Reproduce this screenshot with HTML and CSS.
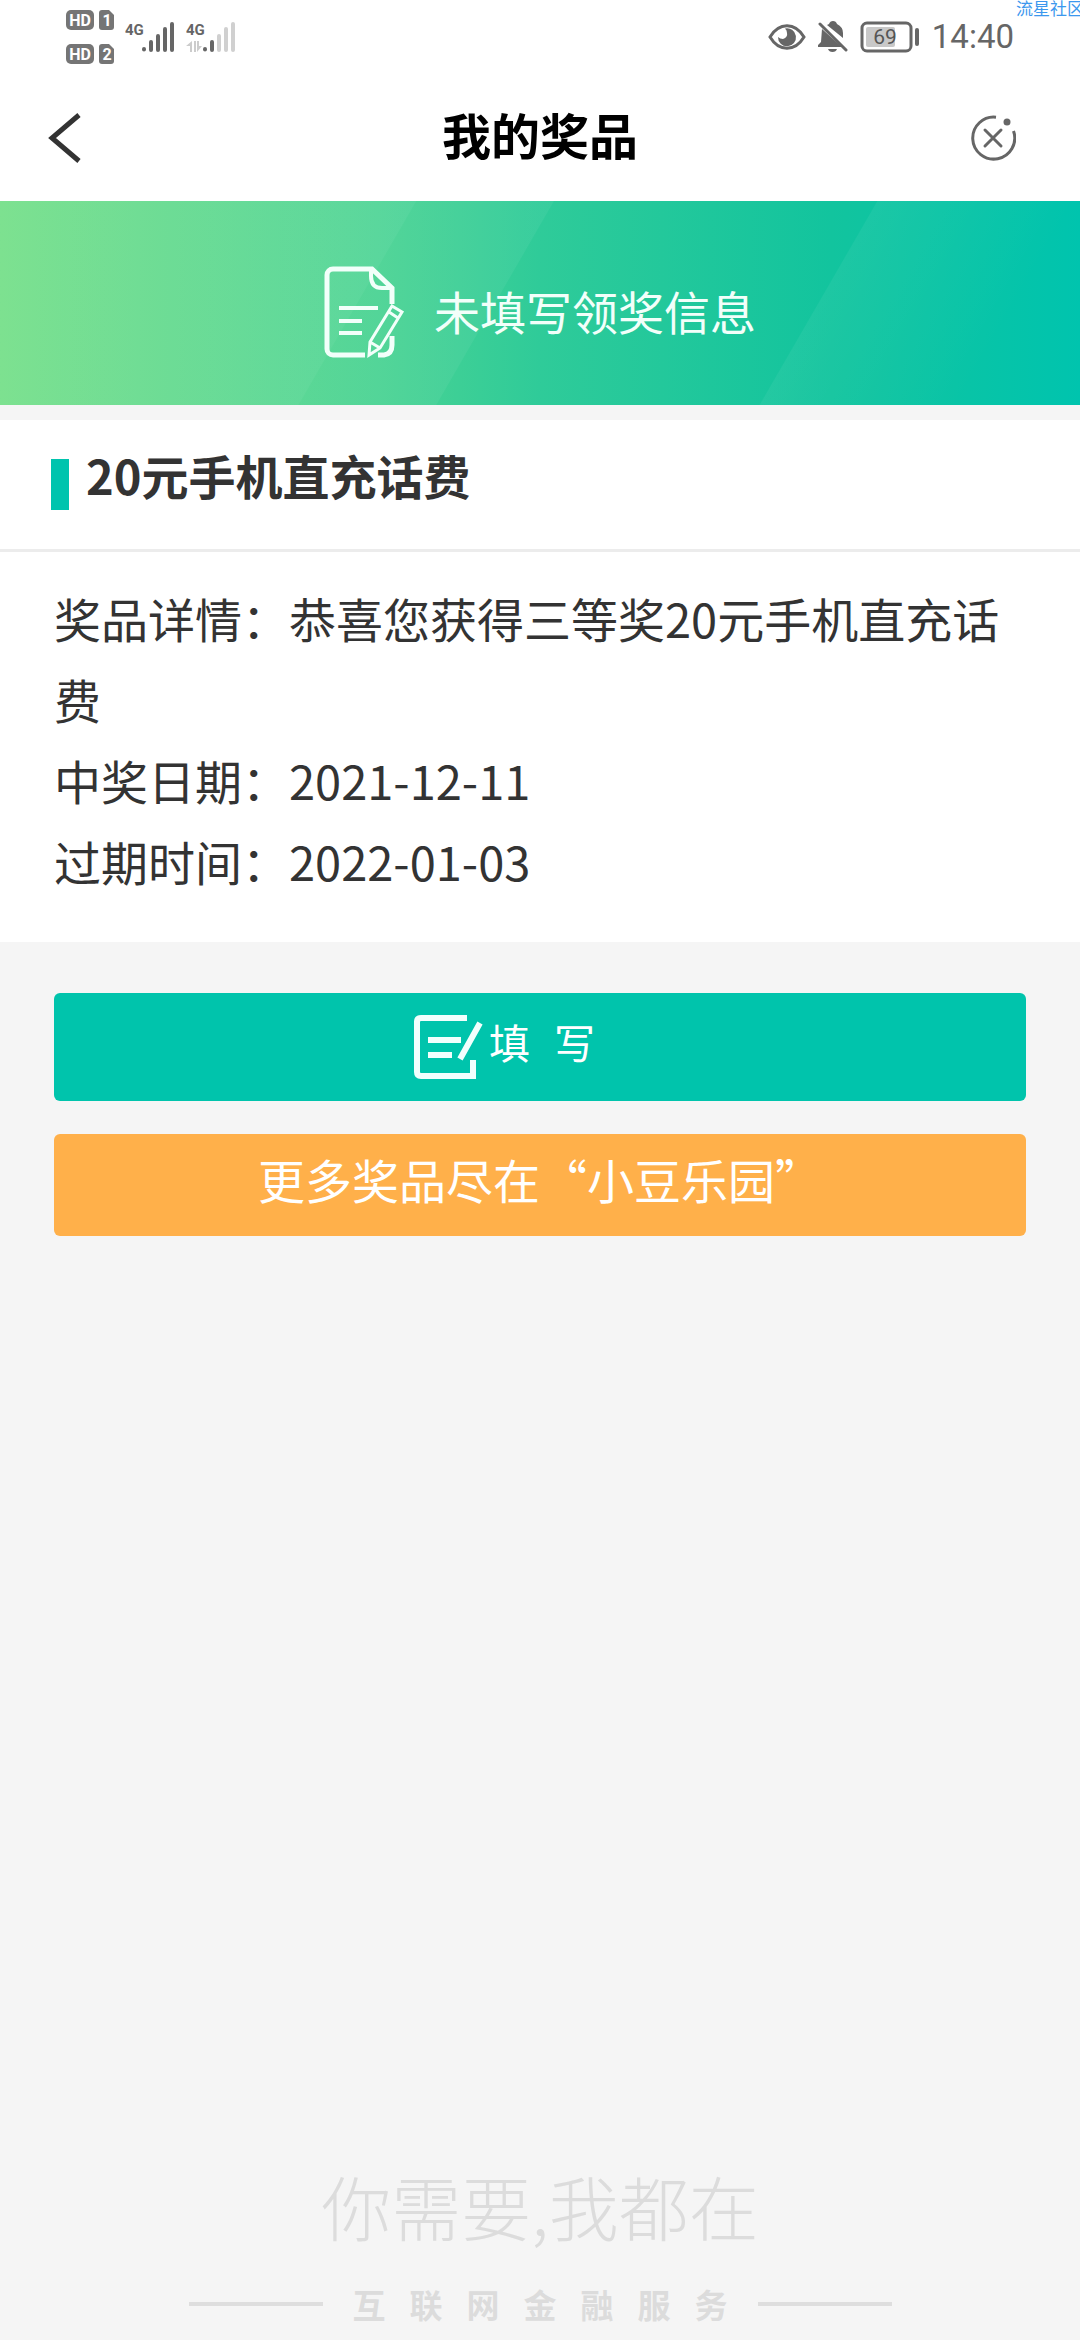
FILE: index.html
```html
<!DOCTYPE html>
<html lang="zh-CN">
<head>
    <meta charset="UTF-8">
    <meta name="viewport" content="width=device-width, initial-scale=1.0">
    <title>我的奖品</title>
    <link rel="stylesheet" href="styles.css">
</head>
<body>

<!-- 状态栏 -->
<div class="status-bar">
    <div class="status-left">
        <svg class="hd" width="48" height="54" viewBox="0 0 48 54">
            <g fill="#757575">
                <rect x="0" y="0" width="28" height="20" rx="5"/>
                <path d="M36 0h7l5 5v12a3 3 0 0 1-3 3h-9a3 3 0 0 1-3-3V3a3 3 0 0 1 3-3z"/>
                <rect x="0" y="34" width="28" height="20" rx="5"/>
                <path d="M36 34h7l5 5v12a3 3 0 0 1-3 3h-9a3 3 0 0 1-3-3V37a3 3 0 0 1 3-3z"/>
            </g>
            <g class="hd-text">
                <text x="14" y="16">HD</text>
                <text x="41" y="16">1</text>
                <text x="14" y="50">HD</text>
                <text x="41" y="50">2</text>
            </g>
        </svg>
        <svg width="50" height="32" viewBox="0 0 50 32">
            <text class="net-text" x="0" y="14">4G</text>
            <g stroke="#666" stroke-width="4" stroke-linecap="round">
                <path d="M19 28v0.5M26 21v8M33 15v14M40 8v21M47 3v26"/>
            </g>
        </svg>
        <svg width="50" height="32" viewBox="0 0 50 32">
            <text class="net-text" x="0" y="14">4G</text>
            <path d="M6 20v11H4v-6H0zM8 20h2v11H8zM11 20v11l5-6h-3v-5z" fill="#ccc"/>
            <g stroke-width="4" stroke-linecap="round">
                <path d="M19 28v0.5M26 21v8" stroke="#666"/>
                <path d="M33 15v14M40 8v21M47 3v26" stroke="#d0d0d0"/>
            </g>
        </svg>
    </div>
    <div class="status-right">
        <svg width="38" height="26" viewBox="0 0 38 26">
            <path d="M2 13C11-2 27-2 36 13C27 28 11 28 2 13z" fill="none" stroke="#666" stroke-width="3"/>
            <path d="M17 4.500A9 9 0 1 1 10 13Q12 15 15 15Q20 13 19 9Q19 6 17 4.500z" fill="#666"/>
        </svg>
        <svg width="30" height="32" viewBox="0 0 30 32">
            <path d="M4 8L24 26H0v-2l3-3zM11 3q1-3 4-3q3 0 4 3q6 3 6 9v5L9 4zM10 28h9q-1 3-4.500 3T10 28z" fill="#666"/>
            <path d="M2 3L28 29" stroke="#666" stroke-width="3" stroke-linecap="round"/>
        </svg>
        <svg width="60" height="32" viewBox="0 0 60 32">
            <rect x="2" y="2" width="49" height="28" rx="5" fill="none" stroke="#666" stroke-width="3"/>
            <rect x="6" y="6" width="29" height="20" rx="2" fill="#c8c8c8"/>
            <rect x="55" y="7" width="4" height="18" rx="2" fill="#666"/>
            <text class="battery-text" x="25" y="23">69</text>
        </svg>
        <span class="time">14:40</span>
    </div>
    <span class="watermark">流星社区</span>
</div>

<!-- 标题栏 -->
<header class="nav">
    <button class="nav-btn" type="button" aria-label="返回">
        <svg width="34" height="50" viewBox="0 0 34 50">
            <path d="M31 2L4 25L31 48" fill="none" stroke="#333" stroke-width="5"/>
        </svg>
    </button>
    <h1>我的奖品</h1>
    <button class="nav-btn close-btn" type="button" aria-label="关闭">
        <svg width="46" height="46" viewBox="0 0 46 46" fill="none" stroke="#666" stroke-width="3">
            <path d="M26 2.200A21 21 0 1 0 43.500 16"/>
            <path d="M15 15L31 31M31 15L15 31" stroke-linecap="round"/>
            <circle cx="37" cy="7" r="3.500" fill="#666" stroke="none"/>
        </svg>
    </button>
</header>

<!-- 领奖状态 -->
<section class="banner">
    <svg width="82" height="92" viewBox="0 0 82 92" fill="none" stroke="#f2fffa">
        <path d="M41 89H9a6 6 0 0 1-6-6V9a6 6 0 0 1 6-6h39L68 22V38M54 89h6q8-1 8-10V70" stroke-width="5"/>
        <path d="M47 4v6q0 12 11 12h10" stroke-width="4"/>
        <path d="M15 42h39M15 55h23M15 67h23" stroke-width="4"/>
        <path d="M68 40L78 46L56 82L45 89L46 76zM65 46L74 52M46 76L56 82" stroke-width="3"/>
    </svg>
    <span>未填写领奖信息</span>
</section>

<!-- 奖品信息 -->
<main class="prize">
    <h2><span>20元手机直充话费</span></h2>
    <div class="details">
        <p>奖品详情：恭喜您获得三等奖20元手机直充话费</p>
        <p>中奖日期：2021-12-11</p>
        <p>过期时间：2022-01-03</p>
    </div>
</main>

<div class="actions">
    <button class="btn fill-btn" type="button">
        <svg width="72" height="66" viewBox="0 0 72 66" fill="none" stroke="#f2fffd" stroke-width="6">
            <path d="M54 4H8Q4 4 4 8V58Q4 62 8 62H60V46"/>
            <path d="M15 26H48M15 41H39M67 9L47 45"/>
        </svg>
        <span>填</span>
        <span>写</span>
    </button>
    <a class="btn more-btn" href="#">更多奖品尽在“小豆乐园”</a>
</div>

<!-- 页脚 -->
<footer>
    <p class="slogan">你需要,我都在</p>
    <div class="service">
        <span class="line"></span>
        <p><span>互</span><span>联</span><span>网</span><span>金</span><span>融</span><span>服</span><span>务</span></p>
        <span class="line"></span>
    </div>
</footer>

</body>
</html>
```
FILE: styles.css
```css
* {
    box-sizing: border-box;
}

body {
    margin: 0;
    min-height: 100vh;
    display: flex;
    flex-direction: column;
    background-color: #f5f5f5;
    color: #333;
    font-family: "Noto Sans CJK SC", sans-serif;
    overflow-x: hidden;
}

h1, h2, p {
    margin: 0;
}

svg {
    display: block;
    flex-shrink: 0;
}

/* 状态栏 */
.status-bar {
    position: relative;
    display: flex;
    justify-content: space-between;
    align-items: center;
    height: 74px;
    padding: 0 66px;
    background-color: #fff;
    overflow: hidden;
}

.status-left,
.status-right {
    display: flex;
    align-items: center;
    gap: 11px;
}

.status-right {
    gap: 12px;
}

.hd-text {
    font: bold 16px Roboto, sans-serif;
    fill: #fff;
    text-anchor: middle;
}

.net-text {
    font: bold 15px Roboto, sans-serif;
    fill: #666;
}

.battery-text {
    font: 21px Roboto, sans-serif;
    fill: #555;
    text-anchor: middle;
}

.time {
    font-family: Roboto, sans-serif;
    font-size: 33px;
    line-height: 32px;
    color: #666;
}

.watermark {
    position: absolute;
    top: 0;
    right: -4px;
    font-size: 17px;
    line-height: 16px;
    color: #3c98ee;
}

/* 标题栏 */
.nav {
    display: grid;
    grid-template-columns: 1fr auto 1fr;
    align-items: center;
    height: 127px;
    padding: 0 48px;
    background-color: #fff;
}

.nav h1 {
    padding-bottom: 8px;
    font-size: 49px;
    line-height: 60px;
    color: #000;
}

.nav-btn {
    justify-self: start;
    padding: 0;
    border: none;
    background: none;
    cursor: pointer;
}

.close-btn {
    justify-self: end;
    margin-right: 16px;
}

/* 领奖状态 */
.banner {
    display: flex;
    justify-content: center;
    align-items: center;
    gap: 28px;
    height: 204px;
    padding-top: 18px;
    color: #f2fffa;
    font-size: 46px;
    line-height: 60px;
    background:
        linear-gradient(120deg, rgba(255, 255, 255, 0.09) 34.7%, rgba(255, 255, 255, 0.05) 34.8%, rgba(255, 255, 255, 0.05) 46.2%, transparent 46.3%, transparent 73.2%, rgba(255, 255, 255, 0.05) 73.3%, transparent 90%),
        linear-gradient(90deg, #70de85, #4ad393 35%, #2fcb99 50%, #12c49e 77%, #00c4ae);
}

.banner span {
    padding-bottom: 4px;
}

/* 奖品信息 */
.prize {
    margin-top: 15px;
    background-color: #fff;
}

.prize h2 {
    display: flex;
    align-items: center;
    gap: 17px;
    height: 132px;
    padding: 0 51px;
    border-bottom: 3px solid #ececec;
    font-size: 47px;
    line-height: 60px;
}

.prize h2::before {
    content: '';
    width: 18px;
    height: 51px;
    background-color: #00c4ae;
}

.prize h2 span {
    padding-bottom: 20px;
}

.details {
    padding: 25px 54px 41px;
    font-size: 47px;
    line-height: 81px;
}

/* 按钮 */
.actions {
    display: flex;
    flex-direction: column;
    gap: 33px;
    padding: 51px 54px;
}

.btn {
    display: flex;
    justify-content: center;
    align-items: center;
    border: none;
    border-radius: 6px;
    color: #fff;
    font-family: inherit;
    font-size: 47px;
    line-height: 60px;
    text-decoration: none;
    cursor: pointer;
}

.fill-btn {
    height: 108px;
    padding: 0 72px 0 0;
    gap: 24px;
    background-color: #00c4ac;
}

.fill-btn svg {
    margin-right: -20px;
}

.fill-btn span {
    font-size: 41px;
    padding-bottom: 12px;
}

.more-btn {
    height: 102px;
    padding-bottom: 12px;
    background-color: #ffb04a;
}

/* 页脚 */
footer {
    margin-top: auto;
    padding-bottom: 12px;
    color: #dcdcdc;
}

.slogan {
    text-align: center;
    font-size: 70px;
    font-weight: 300;
    line-height: 100px;
    margin-bottom: 24px;
}

.service {
    display: flex;
    justify-content: center;
    align-items: center;
    gap: 30px;
}

.service p {
    display: flex;
    gap: 24px;
    font-size: 33px;
    font-weight: bold;
    line-height: 48px;
}

.line {
    width: 134px;
    height: 4px;
    background-color: #dedede;
}
```
